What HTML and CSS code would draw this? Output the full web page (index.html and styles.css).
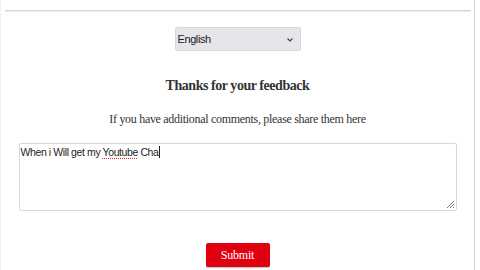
FILE: index.html
```html
<!DOCTYPE html>
<html>
<head>
<meta charset="utf-8">
<link rel="stylesheet" href="styles.css">
</head>
<body>
<div class="frame">
  <div class="rule"></div>
  <div class="content">
    <div class="select">
      <span>English</span>
      <svg class="chev" width="8" height="6" viewBox="0 0 8 6"><path d="M1.5 1.5 L4 4 L6.5 1.5" fill="none" stroke="#444" stroke-width="1.2"/></svg>
    </div>
    <h2 class="title">Thanks for your feedback</h2>
    <p class="lead">If you have additional comments, please share them here</p>
    <div class="textarea">
      <span class="txt">When i Will get my <span class="sp">Youtube</span> Cha<span class="caret"></span></span>
      <svg class="grip" width="9" height="9" viewBox="0 0 9 9"><path d="M8 1 L1 8 M8 4 L4 8 M8 7 L7 8" stroke="#777" stroke-width="1"/></svg>
    </div>
    <div class="btnrow"><div class="btn">Submit</div></div>
  </div>
</div>
</body>
</html>
```
FILE: styles.css
```css
html, body { margin: 0; padding: 0; background: #fff; }
body { width: 480px; height: 270px; overflow: hidden; }
.frame {
  width: 475px;
  height: 270px;
  border-right: 1px solid #d6d6d6;
  border-left: 1px solid #f2f2f2;
  box-sizing: border-box;
  padding-top: 10px;
}
.rule {
  margin: 0 3px 0 4px;
  height: 1px;
  background: #d4d4d4;
  border-bottom: 1px solid #ececec;
}
.content {
  display: flex;
  flex-direction: column;
  align-items: center;
}
.select {
  margin-top: 15px;
  width: 126px;
  height: 24px;
  box-sizing: border-box;
  background: #e5e5ea;
  border: 1px solid #d8d8dc;
  border-radius: 2px;
  display: flex;
  align-items: center;
  justify-content: space-between;
  padding: 0 6px 0 2px;
  font-family: "Liberation Sans", Arial, sans-serif;
  font-size: 11px;
  letter-spacing: -0.4px;
  color: #222;
}
.chev { margin-top: 1px; }
.title {
  margin: 26px 0 0 0;
  font-family: "Liberation Serif", "Times New Roman", serif;
  font-size: 14px;
  letter-spacing: -0.45px;
  font-weight: bold;
  color: #333;
  line-height: 17px;
}
.lead {
  margin: 18px 0 0 0;
  font-family: "Liberation Serif", "Times New Roman", serif;
  font-size: 12px;
  letter-spacing: -0.3px;
  color: #333;
  line-height: 15px;
}
.textarea {
  position: relative;
  margin-top: 16px;
  width: 438px;
  height: 68px;
  box-sizing: border-box;
  border: 1px solid #d8d8d8;
  border-radius: 2px;
  padding: 2px 1px;
  font-family: "Liberation Sans", Arial, sans-serif;
  font-size: 10.5px;
  letter-spacing: -0.4px;
  color: #222;
  line-height: 13px;
}
.sp {
  text-decoration: underline dotted #d33;
  text-underline-offset: 2px;
}
.caret {
  display: inline-block;
  width: 1px;
  height: 12px;
  background: #222;
  vertical-align: -2px;
}
.grip { position: absolute; right: 1px; bottom: 1px; }
.btnrow { margin-top: 32px; }
.btn {
  width: 64px;
  height: 24px;
  box-sizing: border-box;
  background: #e1000f;
  border-radius: 2px;
  box-shadow: 0 1px 1px rgba(0,0,0,0.25);
  color: #fff;
  font-family: "Liberation Serif", "Times New Roman", serif;
  font-size: 12px;
  letter-spacing: -0.2px;
  display: flex;
  align-items: center;
  justify-content: center;
}
```
